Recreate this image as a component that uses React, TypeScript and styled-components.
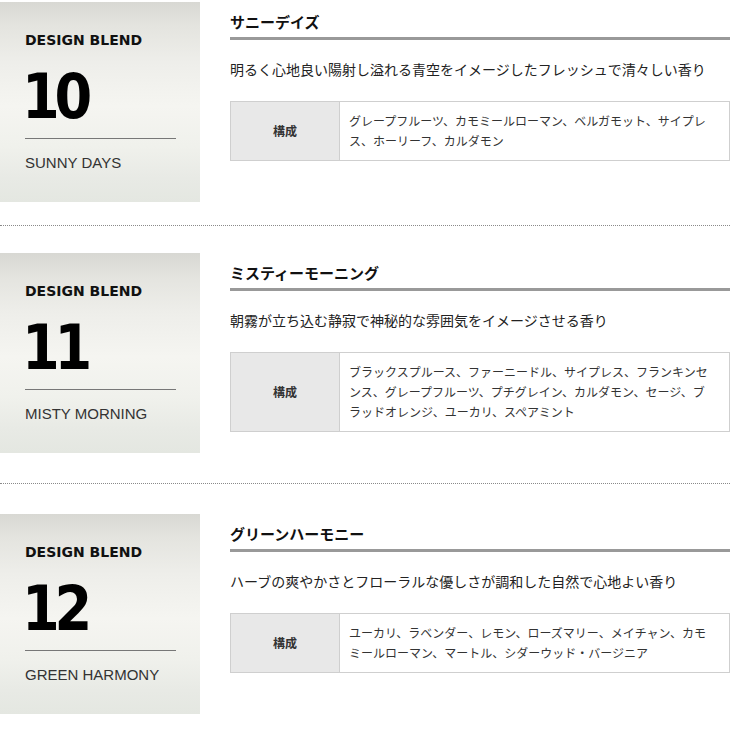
import React from "react";
import styled, { createGlobalStyle } from "styled-components";

const GlobalStyle = createGlobalStyle`
  html, body {
    margin: 0;
    padding: 0;
    background: #ffffff;
  }
  body {
    font-family: "Noto Sans CJK JP", "Noto Sans", sans-serif;
    color: #222;
  }
`;

const Page = styled.div`
  width: 730px;
  padding-top: 2px;
`;

const Section = styled.section<{ $pt: number; $pb: number; $divider: boolean }>`
  display: flex;
  gap: 30px;
  align-items: flex-start;
  padding-top: ${(p) => p.$pt}px;
  padding-bottom: ${(p) => p.$pb}px;
  border-bottom: ${(p) => (p.$divider ? "1px dotted #8a8a8a" : "none")};
`;

const Panel = styled.div`
  flex: 0 0 200px;
  width: 200px;
  height: 200px;
  box-sizing: border-box;
  padding: 30px 24px 0 25px;
  background: linear-gradient(
    to bottom,
    #d8d8d3 0%,
    #e4e4df 12%,
    #eeeeea 30%,
    #f5f5f1 52%,
    #f0f1ec 72%,
    #e8eae5 88%,
    #e4e7e1 100%
  );
`;

const Label = styled.div`
  font-family: "DejaVu Sans", Verdana, sans-serif;
  font-weight: bold;
  font-size: 14px;
  line-height: 16px;
  color: #111;
`;

const Number = styled.div`
  margin-top: 17px;
  margin-left: -3px;
  font-family: "DejaVu Sans", Verdana, sans-serif;
  font-weight: bold;
  font-size: 63px;
  line-height: 63px;
  letter-spacing: -6px;
  color: #000;
  transform: scaleX(0.86);
  transform-origin: left center;
`;

const Rule = styled.div`
  margin-top: 10px;
  width: 151px;
  height: 1px;
  background: #777;
`;

const EnglishName = styled.div`
  margin-top: 15px;
  font-family: "Liberation Sans", Arial, sans-serif;
  font-size: 15px;
  line-height: 18px;
  color: #333;
`;

const Detail = styled.div`
  flex: 1 1 auto;
  min-width: 0;
  padding-top: 10px;
`;

const Title = styled.h2`
  margin: 0;
  padding-bottom: 5px;
  border-bottom: 3px solid #999;
  font-size: 15px;
  line-height: 20px;
  font-weight: bold;
  color: #111;
`;

const Description = styled.p`
  margin: 19px 0 22px;
  font-size: 14px;
  line-height: 20px;
  color: #222;
`;

const Table = styled.table`
  width: 100%;
  border-collapse: collapse;
  table-layout: fixed;
`;

const HeadCell = styled.th`
  width: 88px;
  padding: 9px 10px;
  border: 1px solid #cfcfcf;
  background: #e8e8e8;
  font-size: 12px;
  line-height: 20px;
  font-weight: bold;
  color: #333;
  text-align: center;
  vertical-align: middle;
`;

const BodyCell = styled.td`
  padding: 9px 18px 9px 9px;
  border: 1px solid #cfcfcf;
  background: #fff;
  font-size: 12px;
  line-height: 20px;
  color: #333;
  text-align: left;
  vertical-align: middle;
`;

type Blend = {
  no: string;
  en: string;
  title: string;
  desc: string;
  notes: string;
  pt: number;
  pb: number;
  divider: boolean;
};

const blends: Blend[] = [
  {
    no: "10",
    en: "SUNNY DAYS",
    title: "サニーデイズ",
    desc: "明るく心地良い陽射し溢れる青空をイメージしたフレッシュで清々しい香り",
    notes: "グレープフルーツ、カモミールローマン、ベルガモット、サイプレス、ホーリーフ、カルダモン",
    pt: 0,
    pb: 23,
    divider: true,
  },
  {
    no: "11",
    en: "MISTY MORNING",
    title: "ミスティーモーニング",
    desc: "朝霧が立ち込む静寂で神秘的な雰囲気をイメージさせる香り",
    notes:
      "ブラックスプルース、ファーニードル、サイプレス、フランキンセンス、グレープフルーツ、プチグレイン、カルダモン、セージ、ブラッドオレンジ、ユーカリ、スペアミント",
    pt: 27,
    pb: 30,
    divider: true,
  },
  {
    no: "12",
    en: "GREEN HARMONY",
    title: "グリーンハーモニー",
    desc: "ハーブの爽やかさとフローラルな優しさが調和した自然で心地よい香り",
    notes: "ユーカリ、ラベンダー、レモン、ローズマリー、メイチャン、カモミールローマン、マートル、シダーウッド・バージニア",
    pt: 30,
    pb: 16,
    divider: false,
  },
];

export default function App() {
  return (
    <>
      <GlobalStyle />
      <Page>
        {blends.map((b) => (
          <Section key={b.no} $pt={b.pt} $pb={b.pb} $divider={b.divider}>
            <Panel>
              <Label>DESIGN BLEND</Label>
              <Number>{b.no}</Number>
              <Rule />
              <EnglishName>{b.en}</EnglishName>
            </Panel>
            <Detail>
              <Title>{b.title}</Title>
              <Description>{b.desc}</Description>
              <Table>
                <tbody>
                  <tr>
                    <HeadCell>構成</HeadCell>
                    <BodyCell>{b.notes}</BodyCell>
                  </tr>
                </tbody>
              </Table>
            </Detail>
          </Section>
        ))}
      </Page>
    </>
  );
}
